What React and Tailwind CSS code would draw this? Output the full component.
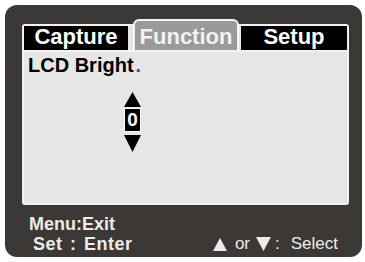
const Up = ({ w, h, className = "" }) => (
  <svg width={w} height={h} viewBox={`0 0 ${w} ${h}`} className={className}>
    <polygon points={`${w / 2},0 ${w},${h} 0,${h}`} fill="currentColor" />
  </svg>
);

const Down = ({ w, h, className = "" }) => (
  <svg width={w} height={h} viewBox={`0 0 ${w} ${h}`} className={className}>
    <polygon points={`0,0 ${w},0 ${w / 2},${h}`} fill="currentColor" />
  </svg>
);

export default function App() {
  return (
    <div className="w-[365px] h-[262px] bg-white pt-[5px] pl-[5px] font-['Liberation_Sans',Arial,sans-serif]">
      <div className="w-[357px] h-[252px] rounded-[12px] bg-[#3b3836] pt-[19px] pl-[17px]">
        {/* screen area */}
        <div className="w-[327px] h-[181px] rounded-[3px] border-2 border-[#f2f2f2] bg-[#e6e6e6]">
          <div className="flex items-end h-[26px] border-b-2 border-[#f2f2f2]">
            <div className="w-[104px] h-[24px] bg-black text-white text-[22px] font-bold leading-[22px] text-center">
              Capture
            </div>
            <div className="ml-[5px] w-[106px] h-[31px] -mt-[7px] rounded-t-[6px] border-2 border-b-0 border-[#f4f4f4] bg-[#9a9a9a] text-[#f2f2f2] text-[22px] font-bold leading-[22px] text-center pt-[5px]">
              Function
            </div>
            <div className="ml-[2px] w-[106px] h-[24px] bg-black text-white text-[22px] font-bold leading-[22px] text-center">
              Setup
            </div>
          </div>

          <div className="pl-[4px] mt-[2px] text-[20px] font-bold leading-[22px] text-black">
            LCD Bright<span className="ml-[2px] text-[#555]">.</span>
          </div>

          <div className="ml-[100px] mt-[16px] w-[17px] flex flex-col items-center text-black">
            <Up w={17} h={15} />
            <div className="mt-[1px] w-[17px] h-[24px] bg-black border border-white text-white text-[19px] font-bold leading-[22px] text-center">
              0
            </div>
            <Down w={17} h={17} className="mt-[3px]" />
          </div>
        </div>

        {/* footer */}
        <div className="w-[327px] pt-[9px] pl-[7px] pr-[11px] text-[#ececec]">
          <div className="text-[18px] font-bold leading-[20px]">Menu:Exit</div>
          <div className="flex items-end justify-between">
            <div className="pl-[4px] text-[18px] font-bold leading-[20px] tracking-[0.5px] [word-spacing:2px]">
              Set : Enter
            </div>
            <div className="flex items-center text-[17px] leading-[20px]">
              <Up w={14} h={13} />
              <span className="ml-[8px]">or</span>
              <Down w={15} h={14} className="ml-[6px]" />
              <span className="ml-[4px]">:</span>
              <span className="ml-[11px]">Select</span>
            </div>
          </div>
        </div>
      </div>
    </div>
  );
}
